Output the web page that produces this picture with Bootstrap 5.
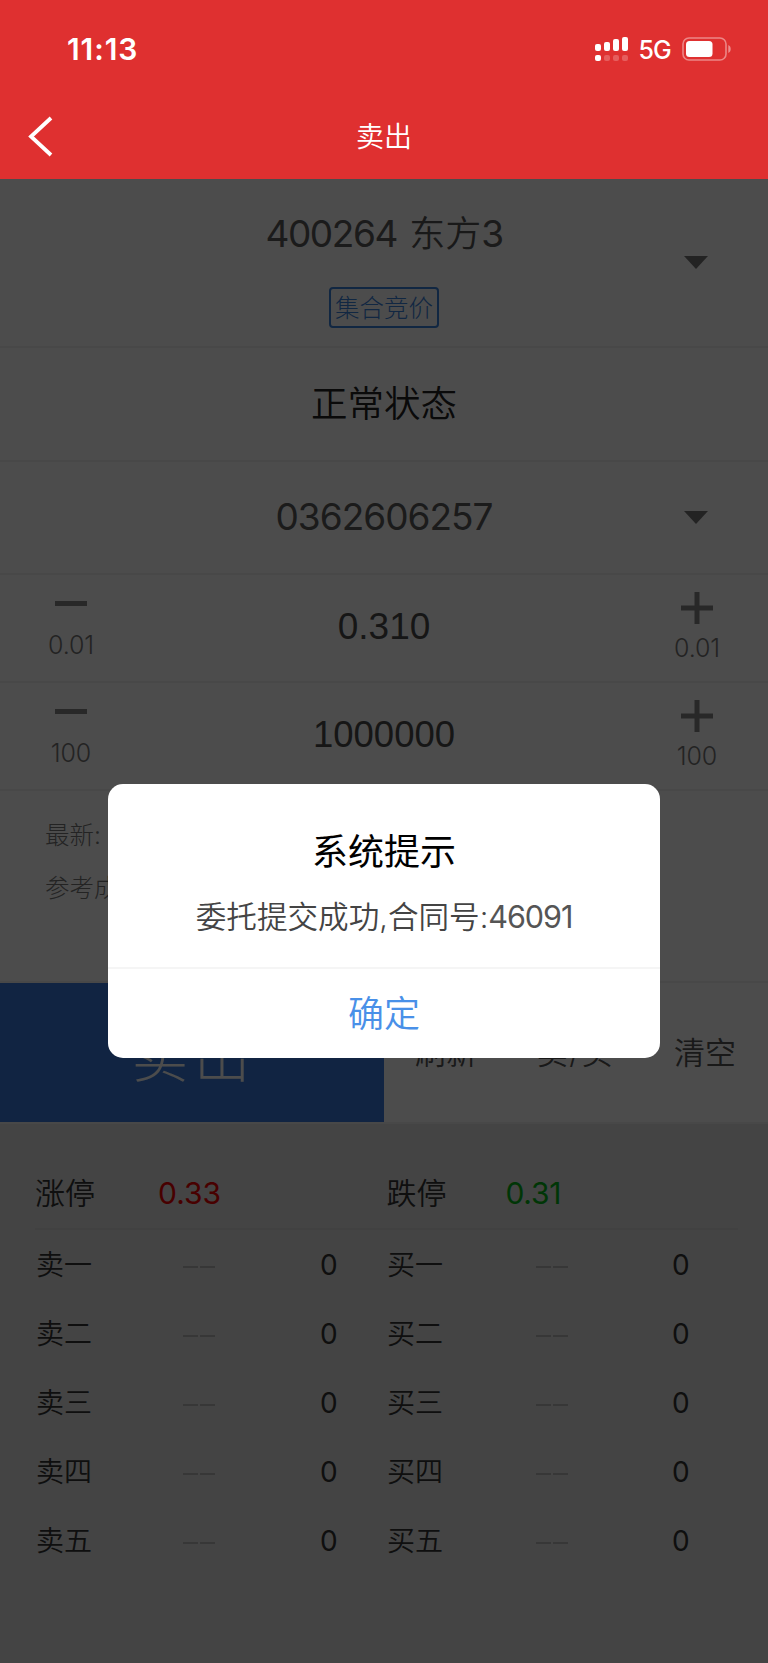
<!DOCTYPE html>
<html lang="zh-CN">
<head>
<meta charset="utf-8">
<meta name="viewport" content="width=device-width, initial-scale=1">
<title>卖出</title>
<link href="https://cdn.jsdelivr.net/npm/bootstrap@5.3.0/dist/css/bootstrap.min.css" rel="stylesheet">
<style>
body{font-family:Inter,"Noto Sans CJK SC",sans-serif;background:#e3e3e3;height:1663px;overflow:hidden;line-height:1;color:#4c4c4c;font-weight:350}
.app-head{height:179px;background:#df3030;color:#fff}
.status-bar{height:98px;padding:0 36px 0 67px}
.clock{font-size:30px;font-weight:600;letter-spacing:.9px}
.net{font-size:25px;font-weight:500;letter-spacing:-.8px;padding-top:2px;margin-left:8px;margin-right:11px}
.title-bar{height:77px;font-size:28px;display:grid;grid-template-columns:1fr auto 1fr}
.line{border-bottom:2px solid #f2f2f2;background:#fff}
.side{width:142px;flex:none}
.h-stock{height:169px}.h-state{height:114px}.h-acct{height:113px}.h-step{height:108px}.h-info{height:192px}.h-act{height:141px}
.num{font-size:37px;letter-spacing:-1px;font-weight:400;color:#5a5a5a;padding-bottom:2px}
.stock .num{letter-spacing:-1.4px}
.arial{font-family:"Liberation Sans",sans-serif;font-size:37px;padding-bottom:3px}
.arial.wide{font-size:36.5px;padding-bottom:2px}
.stock{font-size:36px;padding-top:18px;word-spacing:2px;color:#555}
.tag{width:110px;height:41px;margin-top:35px;border:2px solid #3b82dc;border-radius:4px;color:#3b82dc;font-size:24.5px;font-weight:300;padding-top:2px}
.caret{margin-left:58px}
.state{font-size:36.5px;color:#222;padding-top:1px}
.step{font-size:25px;font-weight:300;letter-spacing:-.1px;color:#777}
.minus{margin-bottom:3px;margin-top:2px}
.plus{margin-bottom:7px;margin-top:-3px}
.info{font-size:24.5px;font-weight:300;padding:32px 0 0 45px;color:#777}
.sell{width:384px;background:#397bdc;color:#fff;font-size:56px;font-weight:300;letter-spacing:6px;padding:8px 0 0 4px}
.acts{font-size:31px;padding:0 32px 0 31px;color:#555}
.swap{letter-spacing:1.5px}
.limits{height:106px;margin:0 30px 0 35px;border-bottom:2px solid #dadada;padding-top:34px;font-size:30px;color:#333}
.limits>div{width:352px}
.lab{width:123px}
.lab.short{width:119px}
.up,.down{font-weight:400}
.up{color:#f00000}.down{color:#00b414;letter-spacing:-.3px}
.quote{height:69px;padding-left:36px;font-size:28px;color:#333}
.half{width:351px}
.half .name{width:147px}
.half:last-child .name{width:149px}
.qty{font-weight:400}
.dash{width:137px;display:flex;gap:2px}
.half:last-child .dash{width:136px}
.dash i{width:15px;height:2px;background:#b8b8b8;margin-top:5px}
.dim{position:absolute;left:0;top:179px;right:0;bottom:0;background:rgba(0,0,0,.7)}
.dialog-box{position:absolute;left:108px;top:784px;width:552px;height:274px;border-radius:15px;background:#fff}
.dlg-main{height:185px;border-bottom:2px solid #f5f5f5;padding-top:50px}
.dlg-title{font-size:36px;color:#000;font-weight:400}
.dlg-text{font-size:30.6px;color:#444;margin-top:32px}
.dlg-text span{letter-spacing:-1.1px;font-weight:400;color:#555}
.dlg-ok{height:89px;font-size:36px;color:#4990e8;background:none;border:0;font-weight:350}
</style>
</head>
<body class="position-relative">
<header class="app-head">
  <div class="status-bar d-flex align-items-center justify-content-between">
    <span class="clock">11:13</span>
    <div class="d-flex align-items-center">
      <svg width="36" height="26" viewBox="0 0 36 26" fill="#fff"><rect x="1" y="8" width="6" height="7" rx="2"/><rect x="10" y="6" width="6" height="9" rx="2"/><rect x="19" y="3" width="6" height="12" rx="2"/><rect x="28" y="1" width="6" height="14" rx="2"/><rect x="1" y="19" width="6" height="6" rx="2"/><g opacity=".22"><rect x="10" y="19" width="6" height="6" rx="2"/><rect x="19" y="19" width="6" height="6" rx="2"/><rect x="28" y="19" width="6" height="6" rx="2"/></g></svg>
      <span class="net">5G</span>
      <svg width="50" height="24" viewBox="0 0 50 24"><rect x="1" y="1" width="43" height="22" rx="6" fill="none" stroke="#fff" stroke-opacity=".42" stroke-width="1.6"/><rect x="4" y="4" width="26.5" height="16" rx="3.5" fill="#fff"/><path d="M46.3 8c3.2 1.2 3.2 6.800 0 8z" fill="#fff" fill-opacity=".45"/></svg>
    </div>
  </div>
  <div class="title-bar align-items-center">
    <svg width="54" height="42" viewBox="0 0 54 42"><path d="M51 2 31 20.500 51 39" fill="none" stroke="#fff" stroke-width="3.800"/></svg>
    <span>卖出</span>
  </div>
</header>
<main>
  <section class="line h-stock d-flex align-items-center">
    <div class="side"></div>
    <div class="flex-fill d-flex flex-column align-items-center">
      <div class="stock"><span class="num">400264</span> 东方<span class="num">3</span></div>
      <div class="tag d-flex align-items-center justify-content-center">集合竞价</div>
    </div>
    <div class="side d-flex"><svg class="caret" width="24" height="13"><path d="M0 0H24L12 13z" fill="#777"/></svg></div>
  </section>
  <section class="line h-state state d-flex align-items-center justify-content-center">正常状态</section>
  <section class="line h-acct d-flex align-items-center">
    <div class="side"></div><div class="num flex-fill text-center">0362606257</div>
    <div class="side d-flex"><svg class="caret" width="24" height="13"><path d="M0 0H24L12 13z" fill="#777"/></svg></div>
  </section>
  <section class="line h-step d-flex align-items-center">
    <div class="side step text-center"><svg class="minus d-block mx-auto" width="32" height="29"><path d="M0 2.500H32" stroke="#888" stroke-width="5"/></svg>0.01</div>
    <div class="arial flex-fill text-center">0.310</div>
    <div class="side step text-center"><svg class="plus d-block mx-auto" width="32" height="37"><path d="M0 16H32M16 0V32" stroke="#888" stroke-width="5"/></svg>0.01</div>
  </section>
  <section class="line h-step d-flex align-items-center">
    <div class="side step text-center"><svg class="minus d-block mx-auto" width="32" height="29"><path d="M0 2.500H32" stroke="#888" stroke-width="5"/></svg>100</div>
    <div class="arial wide flex-fill text-center">1000000</div>
    <div class="side step text-center"><svg class="plus d-block mx-auto" width="32" height="37"><path d="M0 16H32M16 0V32" stroke="#888" stroke-width="5"/></svg>100</div>
  </section>
  <section class="line h-info info"><div>最新:</div><div class="mt-4 pt-1">参考成</div></section>
  <section class="line h-act d-flex">
    <div class="sell d-flex align-items-center justify-content-center">卖出</div>
    <div class="acts flex-fill d-flex align-items-center justify-content-between"><span>刷新</span><span class="swap">卖/买</span><span>清空</span></div>
  </section>
  <section class="limits d-flex align-items-center">
    <div class="d-flex"><span class="lab">涨停</span><span class="up">0.33</span></div>
    <div class="d-flex"><span class="lab short">跌停</span><span class="down">0.31</span></div>
  </section>
  <section>
    <div class="quote d-flex align-items-center"><div class="half d-flex align-items-center"><span class="name">卖一</span><span class="dash"><i></i><i></i></span><span class="qty">0</span></div><div class="half d-flex align-items-center"><span class="name">买一</span><span class="dash"><i></i><i></i></span><span class="qty">0</span></div></div>
    <div class="quote d-flex align-items-center"><div class="half d-flex align-items-center"><span class="name">卖二</span><span class="dash"><i></i><i></i></span><span class="qty">0</span></div><div class="half d-flex align-items-center"><span class="name">买二</span><span class="dash"><i></i><i></i></span><span class="qty">0</span></div></div>
    <div class="quote d-flex align-items-center"><div class="half d-flex align-items-center"><span class="name">卖三</span><span class="dash"><i></i><i></i></span><span class="qty">0</span></div><div class="half d-flex align-items-center"><span class="name">买三</span><span class="dash"><i></i><i></i></span><span class="qty">0</span></div></div>
    <div class="quote d-flex align-items-center"><div class="half d-flex align-items-center"><span class="name">卖四</span><span class="dash"><i></i><i></i></span><span class="qty">0</span></div><div class="half d-flex align-items-center"><span class="name">买四</span><span class="dash"><i></i><i></i></span><span class="qty">0</span></div></div>
    <div class="quote d-flex align-items-center"><div class="half d-flex align-items-center"><span class="name">卖五</span><span class="dash"><i></i><i></i></span><span class="qty">0</span></div><div class="half d-flex align-items-center"><span class="name">买五</span><span class="dash"><i></i><i></i></span><span class="qty">0</span></div></div>
  </section>
</main>
<div class="dim"></div>
<div class="dialog-box text-center" role="dialog">
  <div class="dlg-main"><div class="dlg-title">系统提示</div><div class="dlg-text">委托提交成功,合同号:<span>46091</span></div></div>
  <button class="dlg-ok w-100 p-0">确定</button>
</div>
<script src="https://cdn.jsdelivr.net/npm/bootstrap@5.3.0/dist/js/bootstrap.bundle.min.js"></script>
</body>
</html>
